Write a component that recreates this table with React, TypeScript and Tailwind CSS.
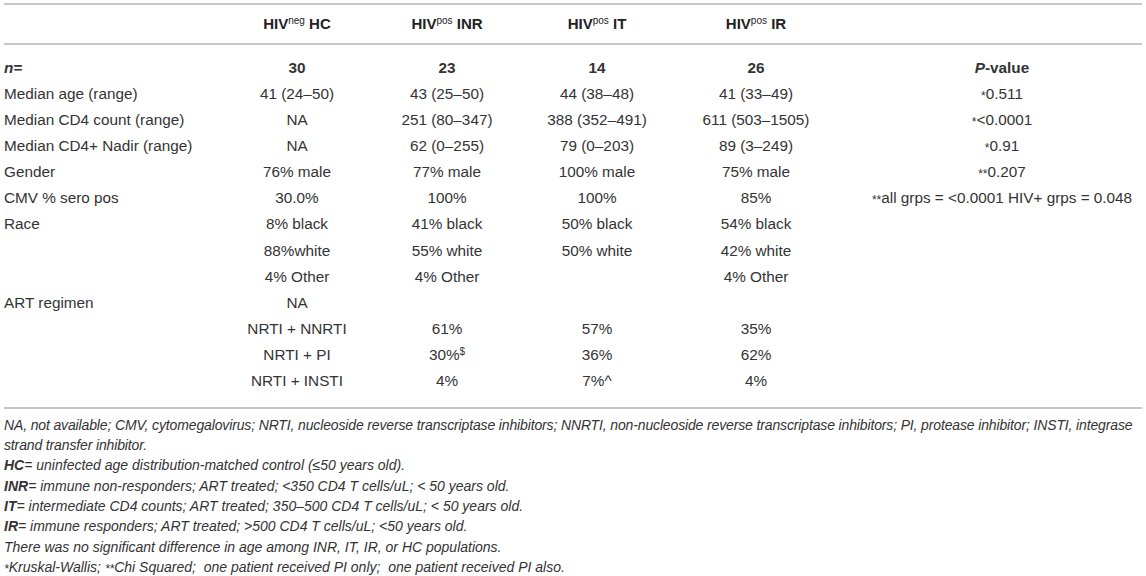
import React from "react";

const font = { fontFamily: '"Liberation Sans", Arial, Helvetica, sans-serif' };

type Row = [React.ReactNode, React.ReactNode, React.ReactNode, React.ReactNode, React.ReactNode, React.ReactNode];

const S = ({ children }: { children: React.ReactNode }) => (
  <sup className="text-[12px] relative top-[1px]">{children}</sup>
);

const rows: Row[] = [
  [<span className="font-bold italic">n=</span>, <b>30</b>, <b>23</b>, <b>14</b>, <b>26</b>, <b><i>P</i>-value</b>],
  ["Median age (range)", "41 (24–50)", "43 (25–50)", "44 (38–48)", "41 (33–49)", <><S>*</S>0.511</>],
  ["Median CD4 count (range)", "NA", "251 (80–347)", "388 (352–491)", "611 (503–1505)", <><S>*</S>&lt;0.0001</>],
  ["Median CD4+ Nadir (range)", "NA", "62 (0–255)", "79 (0–203)", "89 (3–249)", <><S>*</S>0.91</>],
  ["Gender", "76% male", "77% male", "100% male", "75% male", <><S>**</S>0.207</>],
  ["CMV % sero pos", "30.0%", "100%", "100%", "85%", <><S>**</S>all grps = &lt;0.0001 HIV+ grps = 0.048</>],
  ["Race", "8% black", "41% black", "50% black", "54% black", ""],
  ["", "88%white", "55% white", "50% white", "42% white", ""],
  ["", "4% Other", "4% Other", "", "4% Other", ""],
  ["ART regimen", "NA", "", "", "", ""],
  ["", "NRTI + NNRTI", "61%", "57%", "35%", ""],
  ["", "NRTI + PI", <>30%<sup className="text-[10px]">$</sup></>, "36%", "62%", ""],
  ["", "NRTI + INSTI", "4%", "7%^", "4%", ""],
];

const grid = "grid grid-cols-[218px_150px_150px_150px_168px_1fr]";

export default function App() {
  return (
    <div className="w-[1146px] h-[576px] bg-white text-[#333] overflow-hidden pt-[3px] px-[4px]" style={font}>
      <div className="border-t-2 border-b-2 border-[#c6c6c6]">
        <div className={`${grid} h-[38px] items-center text-[15px] font-bold text-[#222]`}>
          <div />
          <div className="text-center">HIV<sup className="text-[10px] font-normal">neg</sup> HC</div>
          <div className="text-center">HIV<sup className="text-[10px] font-normal">pos</sup> INR</div>
          <div className="text-center">HIV<sup className="text-[10px] font-normal">pos</sup> IT</div>
          <div className="text-center">HIV<sup className="text-[10px] font-normal">pos</sup> IR</div>
          <div />
        </div>
      </div>
      <div className="border-b-2 border-[#c6c6c6] pt-[10px] pb-[12px] text-[15.3px]">
        {rows.map((r, i) => (
          <div key={i} className={`${grid} h-[26.15px] items-center whitespace-nowrap`}>
            <div>{r[0]}</div>
            <div className="text-center">{r[1]}</div>
            <div className="text-center">{r[2]}</div>
            <div className="text-center">{r[3]}</div>
            <div className="text-center">{r[4]}</div>
            <div className="text-center pl-[22px]">{r[5]}</div>
          </div>
        ))}
      </div>
      <div className="mt-[6px] italic text-[14px] leading-[20.3px] text-[#333]">
        <p className="tracking-[-0.14px]">
          NA, not available; CMV, cytomegalovirus; NRTI, nucleoside reverse transcriptase inhibitors; NNRTI, non-nucleoside reverse transcriptase inhibitors; PI, protease inhibitor; INSTI, integrase strand transfer inhibitor.
        </p>
        <p><b>HC</b>= uninfected age distribution-matched control (≤50 years old).</p>
        <p><b>INR</b>= immune non-responders; ART treated; &lt;350 CD4 T cells/uL; &lt; 50 years old.</p>
        <p><b>IT</b>= intermediate CD4 counts; ART treated; 350–500 CD4 T cells/uL; &lt; 50 years old.</p>
        <p><b>IR</b>= immune responders; ART treated; &gt;500 CD4 T cells/uL; &lt;50 years old.</p>
        <p>There was no significant difference in age among INR, IT, IR, or HC populations.</p>
        <p>
          <S>*</S>Kruskal-Wallis; <S>**</S>Chi Squared;&nbsp; one patient received PI only;&nbsp; one patient received PI also.
        </p>
      </div>
    </div>
  );
}
